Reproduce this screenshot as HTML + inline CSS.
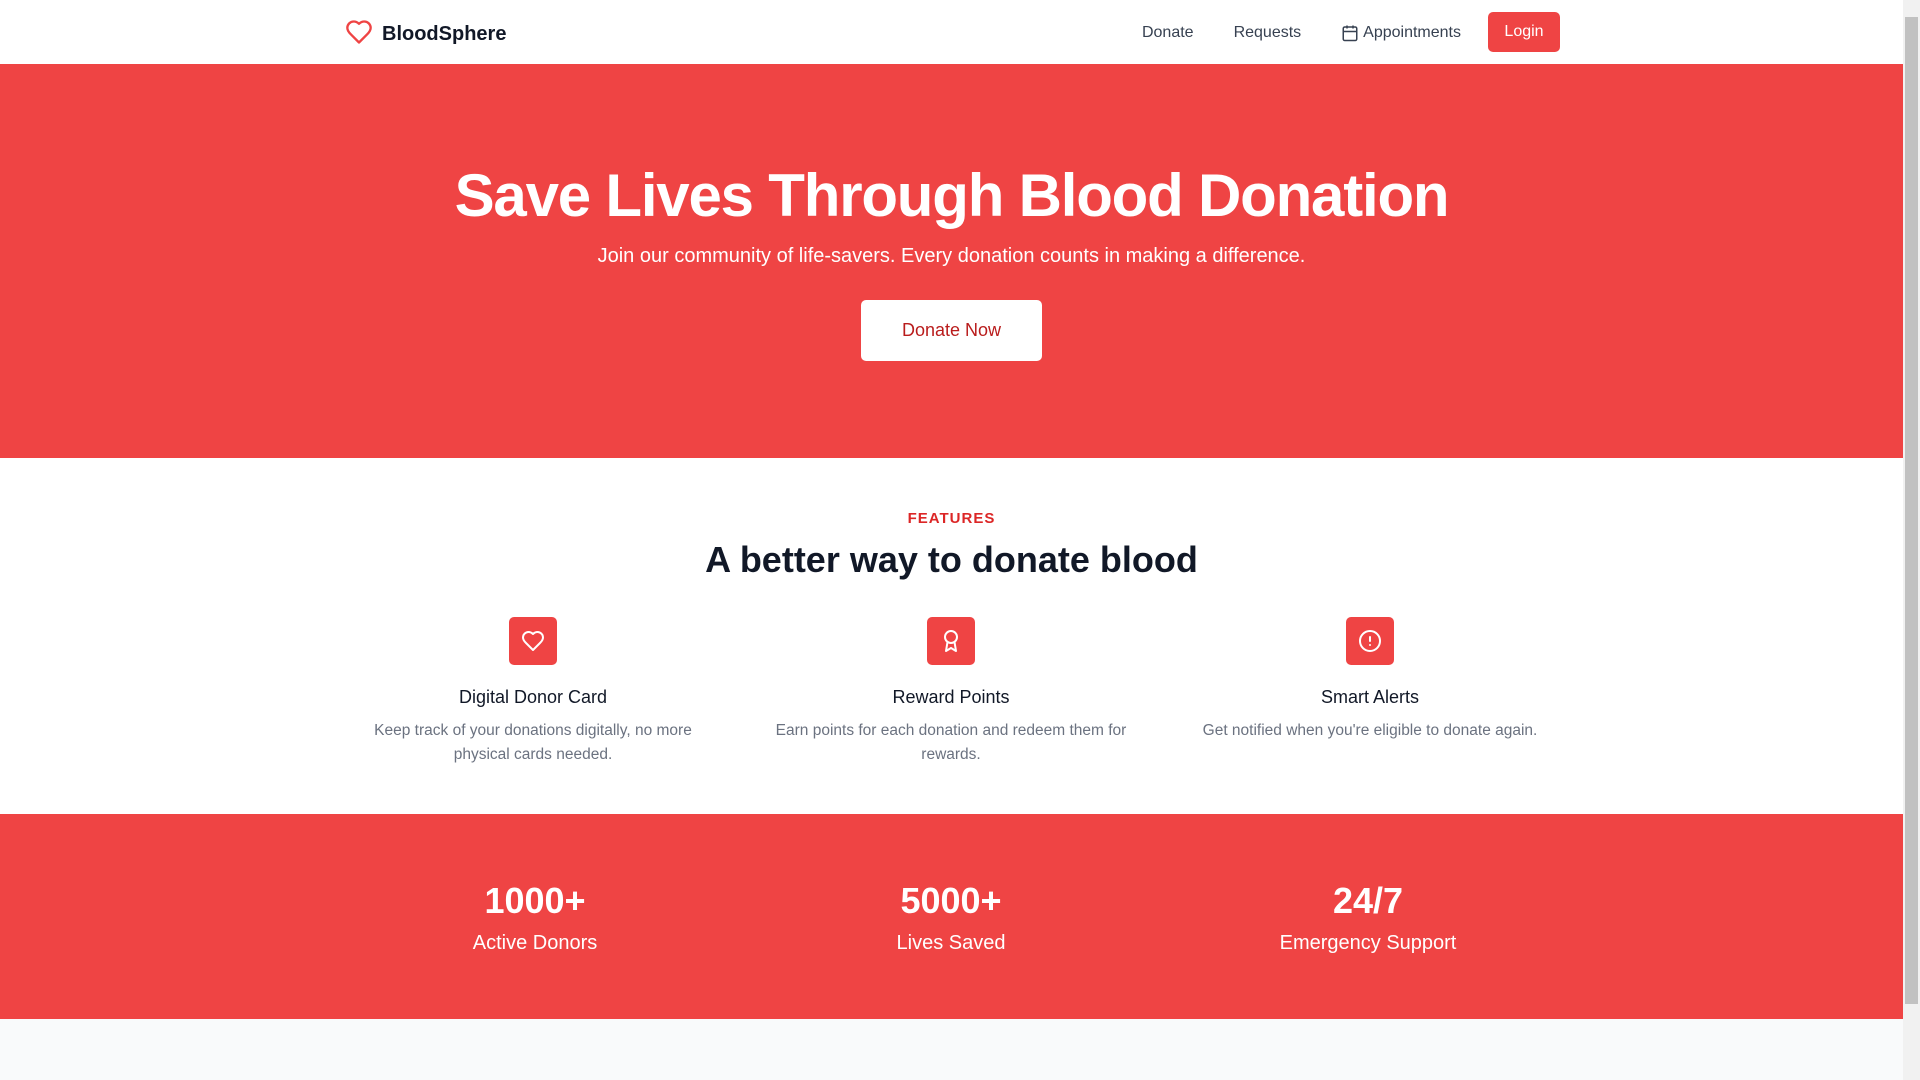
<!DOCTYPE html>
<html><head><meta charset="utf-8"><style>
*{box-sizing:border-box;margin:0;padding:0}
body{width:1920px;height:1080px;overflow:hidden;font-family:"Liberation Sans",sans-serif;background:#f9fafb;position:relative;color:#111827}
.page{width:1903px;position:absolute;left:0;top:0}
nav{height:64px;background:#fff;position:relative}
.logo{position:absolute;left:344px;top:18px;display:flex;align-items:center}
.logo span{font-weight:bold;font-size:20px;margin-left:8px;color:#111827;position:relative;top:2px}
.links{position:absolute;right:343px;top:12px;display:flex;align-items:center;height:40px;font-size:16px;color:#374151}
.links a{text-decoration:none;color:#374151;margin-left:40px;display:flex;align-items:center;position:relative;top:1px}
.login{background:#ef4444;color:#fff!important;height:40px;width:72px;justify-content:center;border-radius:5px;margin-left:27px!important;top:0!important}
.hero{height:394px;background:#ef4444;color:#fff;text-align:center;position:relative}
.hero h1{position:absolute;top:102px;width:100%;font-size:60px;line-height:60px;font-weight:bold;letter-spacing:-1.2px}
.hero p{position:absolute;top:178px;width:100%;font-size:20px;line-height:28px}
.btn{position:absolute;left:861px;top:236px;width:181px;height:61px;background:#fff;border-radius:5px;color:#b91c1c;font-size:18px;line-height:61px}
.feat{height:356px;background:#fff;position:relative;text-align:center}
.feat .lab{position:absolute;top:52px;width:100%;color:#dc2626;font-weight:bold;font-size:15px;letter-spacing:1px}
.feat h2{position:absolute;top:80px;width:100%;font-size:36px;line-height:44px;font-weight:bold}
.col{position:absolute;top:159px;width:384px}
.ic{width:48px;height:48px;background:#ef4444;border-radius:5px;margin:0 auto;display:flex;align-items:center;justify-content:center}
.col h3{font-weight:normal;font-size:18px;margin-top:18px;line-height:28px}
.col p{font-size:15.5px;line-height:24px;color:#6b7280;margin-top:8px;padding:0 12px}
.stats{height:205px;background:#ef4444;color:#fff;position:relative;text-align:center}
.st{position:absolute;top:65px;width:384px}
.st b{display:block;font-size:36px;line-height:44px}
.st span{display:block;font-size:20px;line-height:28px;margin-top:6px}
.sb{position:absolute;right:0;top:0;width:17px;height:1080px;background:#f1f1f1}
.th{position:absolute;left:2px;top:17px;width:13px;height:987px;background:#c1c1c1}
</style></head><body>
<div class="page">
<nav>
<div class="logo"><svg width="30" height="28" viewBox="0 0 24 24" fill="none" stroke="#ef4444" stroke-width="2" stroke-linecap="round" stroke-linejoin="round"><path d="M19 14c1.49-1.46 3-3.21 3-5.5A5.5 5.5 0 0 0 16.5 3c-1.76 0-3 .5-4.5 2-1.5-1.5-2.74-2-4.5-2A5.5 5.5 0 0 0 2 8.5c0 2.3 1.5 4.05 3 5.5l7 7Z"/></svg><span>BloodSphere</span></div>
<div class="links"><a>Donate</a><a>Requests</a><a><svg width="18" height="20" viewBox="0 0 24 24" fill="none" stroke="#374151" stroke-width="2" style="margin-right:4px"><rect x="3" y="4" width="18" height="18" rx="2"/><path d="M16 2v4M8 2v4M3 10h18"/></svg>Appointments</a><a class="login">Login</a></div>
</nav>
<div class="hero">
<h1>Save Lives Through Blood Donation</h1>
<p>Join our community of life-savers. Every donation counts in making a difference.</p>
<div class="btn">Donate Now</div>
</div>
<div class="feat">
<div class="lab">FEATURES</div>
<h2>A better way to donate blood</h2>
<div class="col" style="left:341px"><div class="ic"><svg width="24" height="24" viewBox="0 0 24 24" fill="none" stroke="#fff" stroke-width="2" stroke-linecap="round" stroke-linejoin="round"><path d="M19 14c1.49-1.46 3-3.21 3-5.5A5.5 5.5 0 0 0 16.5 3c-1.76 0-3 .5-4.5 2-1.5-1.5-2.74-2-4.5-2A5.5 5.5 0 0 0 2 8.5c0 2.3 1.5 4.05 3 5.5l7 7Z"/></svg></div><h3>Digital Donor Card</h3><p>Keep track of your donations digitally, no more physical cards needed.</p></div>
<div class="col" style="left:759px"><div class="ic"><svg width="24" height="24" viewBox="0 0 24 24" fill="none" stroke="#fff" stroke-width="2" stroke-linecap="round" stroke-linejoin="round"><circle cx="12" cy="8" r="6"/><path d="M15.477 12.89 17 22l-5-3-5 3 1.523-9.11"/></svg></div><h3>Reward Points</h3><p>Earn points for each donation and redeem them for rewards.</p></div>
<div class="col" style="left:1178px"><div class="ic"><svg width="24" height="24" viewBox="0 0 24 24" fill="none" stroke="#fff" stroke-width="2" stroke-linecap="round" stroke-linejoin="round"><circle cx="12" cy="12" r="10"/><path d="M12 8v4M12 16h.01"/></svg></div><h3>Smart Alerts</h3><p>Get notified when you're eligible to donate again.</p></div>
</div>
<div class="stats">
<div class="st" style="left:343px"><b>1000+</b><span>Active Donors</span></div>
<div class="st" style="left:759px"><b>5000+</b><span>Lives Saved</span></div>
<div class="st" style="left:1176px"><b>24/7</b><span>Emergency Support</span></div>
</div>
</div>
<div class="sb"><div class="th"></div></div>
</body></html>
